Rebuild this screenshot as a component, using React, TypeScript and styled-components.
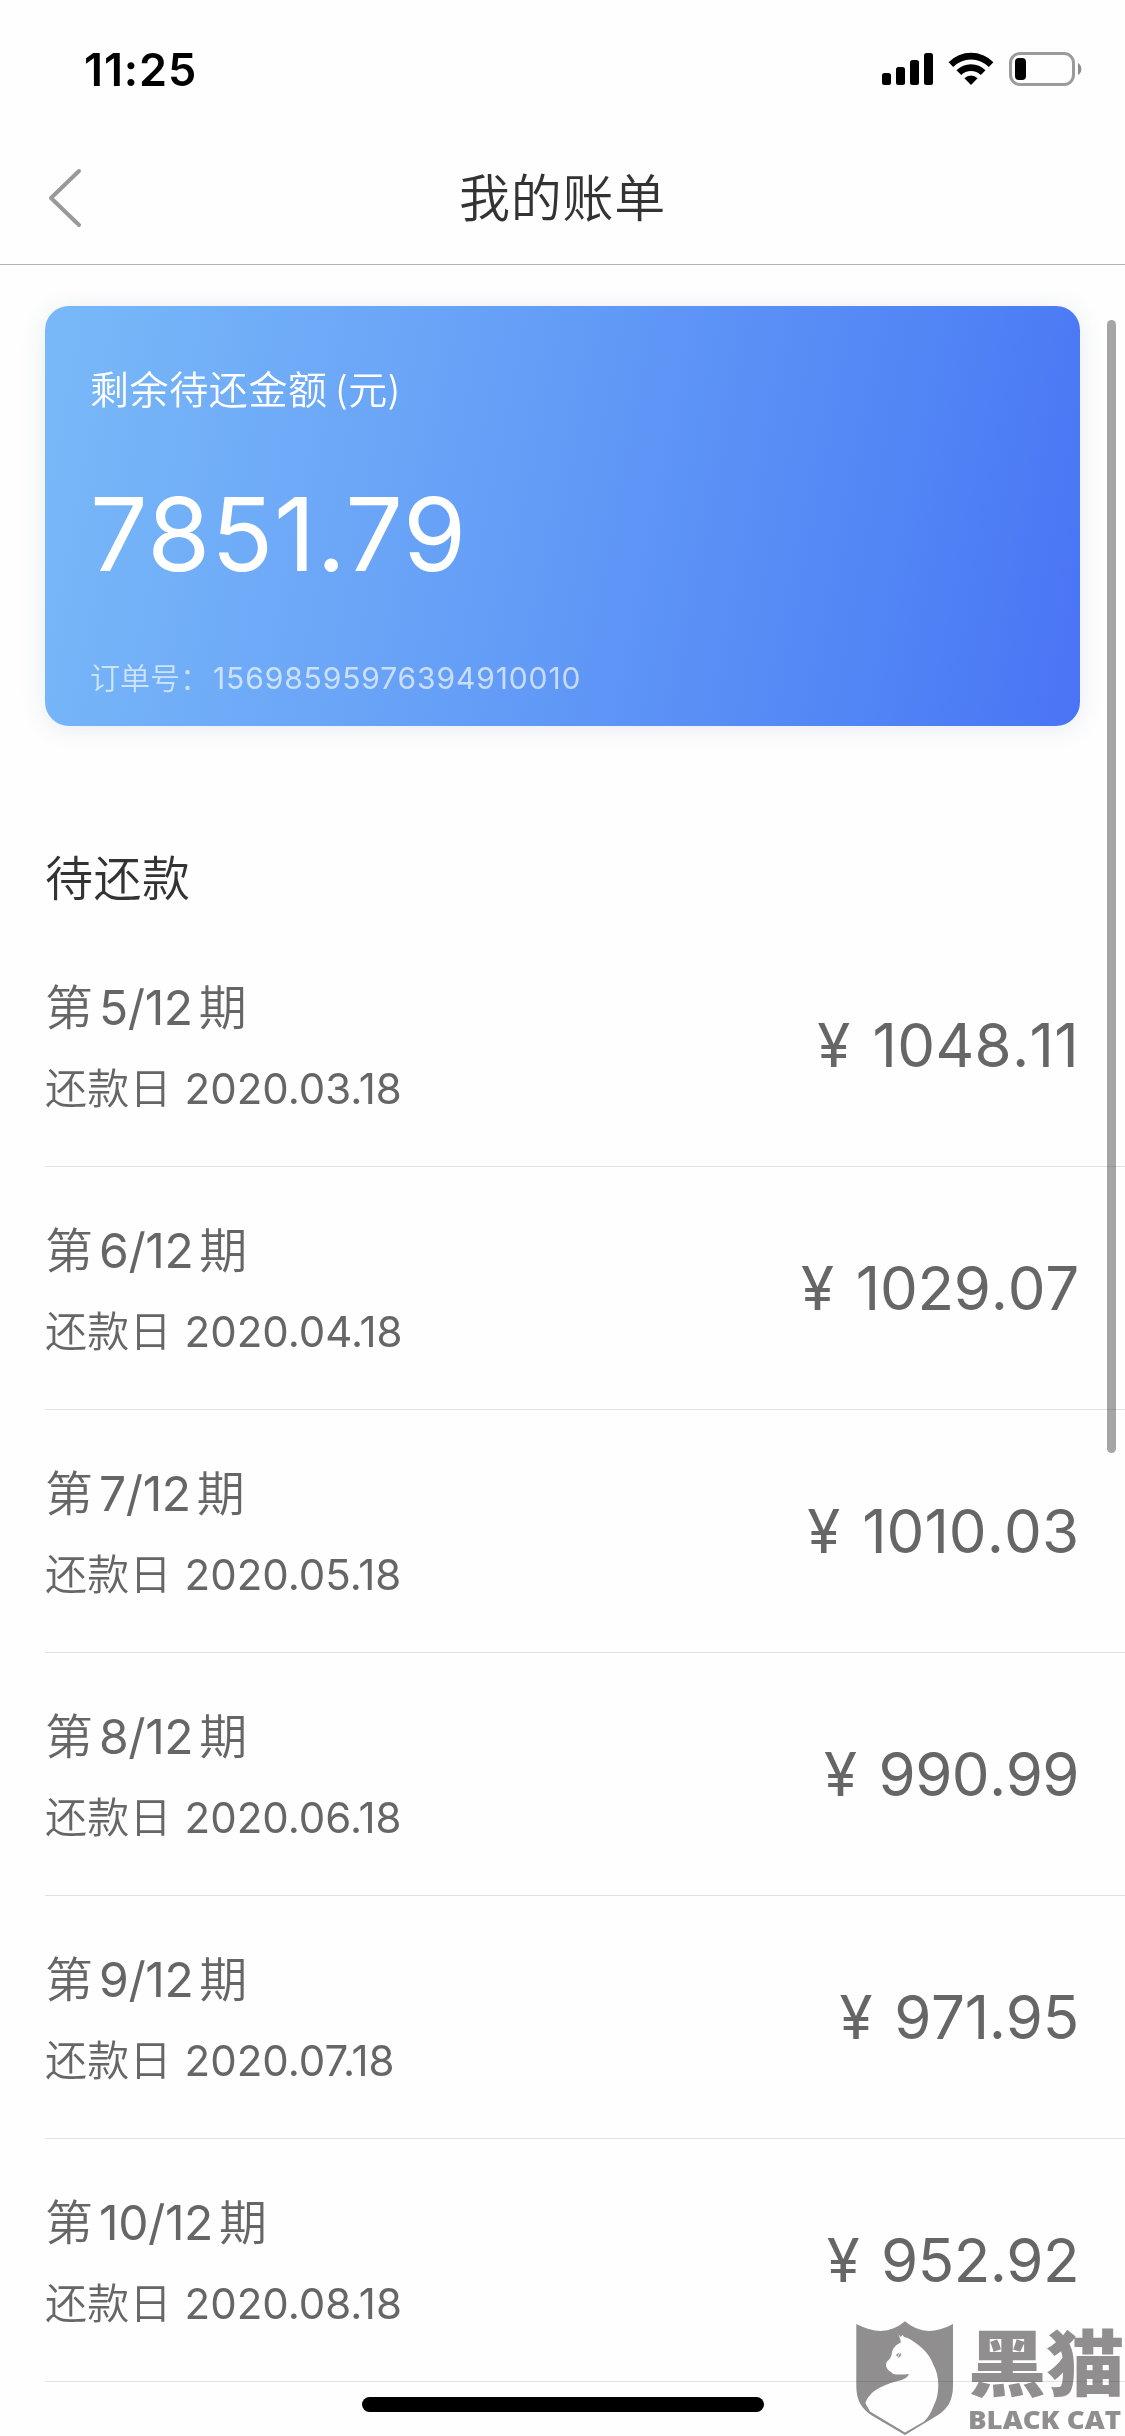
import styled, { createGlobalStyle } from "styled-components";

interface Bill {
  period: string;
  date: string;
  amount: string;
}

const bills: Bill[] = [
  { period: "5/12", date: "2020.03.18", amount: "1048.11" },
  { period: "6/12", date: "2020.04.18", amount: "1029.07" },
  { period: "7/12", date: "2020.05.18", amount: "1010.03" },
  { period: "8/12", date: "2020.06.18", amount: "990.99" },
  { period: "9/12", date: "2020.07.18", amount: "971.95" },
  { period: "10/12", date: "2020.08.18", amount: "952.92" },
];

// ones are narrow, so loosen amounts that have many of them
const getTracking = (amount: string) =>
  (amount.split("1").length - 1) * 0.3 - 0.58;

const StatusIcons = () => (
  <svg width="204" height="40" viewBox="0 0 204 40">
    <rect x="0" y="23" width="9" height="12" rx="2.5" />
    <rect x="14" y="17" width="9" height="18" rx="2.5" />
    <rect x="28" y="10" width="9" height="25" rx="2.5" />
    <rect x="42" y="3" width="9" height="32" rx="2.5" />
    <g transform="translate(66 2)">
      <path d="M0.6 10.2A31.5 31.5 0 0 1 45.4 10.2L40.8 14.9A25 25 0 0 0 5.2 14.9Z" />
      <path d="M8.5 18.2A20.5 20.5 0 0 1 37.5 18.2L32.8 22.9A14 14 0 0 0 13.2 22.9Z" />
      <path d="M16.4 26.2A9.5 9.5 0 0 1 29.6 26.2L23 33Z" />
    </g>
    <rect
      x="128.5"
      y="3.5"
      width="63"
      height="31"
      rx="9.5"
      fill="none"
      stroke="#9b9b9b"
      strokeWidth="3"
    />
    <rect x="133" y="8" width="11" height="22" rx="4" />
    <path d="M196 13a7 7 0 0 1 0 12z" fill="#8c8c8c" />
  </svg>
);

const BackIcon = () => (
  <svg width="34" height="60" viewBox="0 0 34 60">
    <path
      d="M31 3L3 30L31 57"
      fill="none"
      stroke="#999"
      strokeWidth="4"
      strokeLinecap="round"
      strokeLinejoin="round"
    />
  </svg>
);

const Shield = () => (
  <svg width="99" height="116" viewBox="0 0 99 116">
    <path
      d="M1.3 4Q30 19 50 1.3Q70 19 98 4V66C98 82 91 90 83 95L50 115L16 95C8 89 1.3 82 1.3 66Z"
      fill="#918f90"
    />
    <path
      d="M43.5 14L45.5 17L47.7 15L49 17C54 18 58 21 62 24C70 30 75 36 78 44C82 51 83.3 58 83.3 65C83 74 82 79 79 85C76 93 73 98 68.3 102L50 112.5L15 91.5L10.3 83C13 76 18 71 25 67.5C32 64 38 62 45 60.5C50 59 53 57 54 54C49 54.5 43 55 38.3 54C35 51 32 50 31 45.7C31 43 31.5 42 32.5 41C35 39 36 37 36.7 34C37 30 39 27 41.5 25L46 22.3Z"
      fill="#fff"
    />
    <path d="M41 35q2 -2 3 -2l-1.5 4zM45 33q1.5 .5 1 2q-1 3 -3 3z" fill="#918f90" />
  </svg>
);

const App = () => (
  <Screen>
    <GlobalStyle />
    <StatusBar>
      <Clock>11:25</Clock>
      <StatusIcons />
    </StatusBar>
    <NavBar>
      <BackIcon />
      <NavTitle>我的账单</NavTitle>
    </NavBar>
    <Card>
      <CardLabel>
        剩余待还金额<Paren>(元)</Paren>
      </CardLabel>
      <CardAmount>7851.79</CardAmount>
      <CardOrder>
        订单号：<OrderNumber>15698595976394910010</OrderNumber>
      </CardOrder>
    </Card>
    <SectionTitle>待还款</SectionTitle>
    <List>
      {bills.map((b) => (
        <Row key={b.period}>
          <div>
            <Period>
              第<PeriodNumber>{b.period}</PeriodNumber>期
            </Period>
            <DueDate>
              还款日<DateNumber>{b.date}</DateNumber>
            </DueDate>
          </div>
          <Amount $tracking={getTracking(b.amount)}>
            <Yen>¥</Yen>
            {b.amount}
          </Amount>
        </Row>
      ))}
    </List>
    <ScrollThumb />
    <HomeIndicator />
    <Watermark>
      <Shield />
      <Brand>
        <BrandName>黑猫</BrandName>
        <BrandLatin>BLACK CAT</BrandLatin>
      </Brand>
    </Watermark>
  </Screen>
);

const GlobalStyle = createGlobalStyle`
  body {
    margin: 0;
    background-color: #fefefe;
  }
`;
const Screen = styled.div`
  position: relative;
  width: 1125px;
  height: 2436px;
  overflow: hidden;
  background-color: #fefefe;
  font-family: Inter, "Noto Sans CJK SC", sans-serif;
  font-weight: 350;
`;
const StatusBar = styled.div`
  box-sizing: border-box;
  display: flex;
  justify-content: space-between;
  height: 132px;
  padding: 50px 39px 0 84px;
`;
const Clock = styled.div`
  height: 40px;
  line-height: 39px;
  font-size: 45px;
  font-weight: 600;
  letter-spacing: 0.9px;
  color: #000;
`;
const NavBar = styled.div`
  box-sizing: border-box;
  display: flex;
  align-items: center;
  height: 133px;
  padding-left: 48px;
  border-bottom: 1px solid #b2b2b2;
`;
const NavTitle = styled.div`
  flex: 1;
  margin-right: 82px;
  padding-top: 2px;
  text-align: center;
  font-size: 51px;
  letter-spacing: 0.7px;
  line-height: 60px;
  color: #333;
`;
const Card = styled.div`
  box-sizing: border-box;
  display: flex;
  flex-direction: column;
  width: 1035px;
  height: 420px;
  margin: 41px 0 0 45px;
  padding: 56px 0 0 45px;
  border-radius: 24px;
  background: linear-gradient(
    101deg,
    #79b9f8 0%,
    #68a2f7 38%,
    #5e95f6 57%,
    #5184f5 81%,
    #4974f5 100%
  );
  box-shadow: 0 3px 24px rgba(60, 90, 150, 0.12);
  color: #fff;
`;
const CardLabel = styled.div`
  font-size: 39px;
  letter-spacing: 0.6px;
  line-height: 56px;
`;
const Paren = styled.span`
  margin-left: 7px;
  letter-spacing: 0;
`;
const CardAmount = styled.div`
  margin-top: 54px;
  font-size: 102px;
  font-weight: 400;
  letter-spacing: 0.9px;
  line-height: 124px;
`;
const CardOrder = styled.div`
  margin-top: 60px;
  font-size: 30px;
  line-height: 44px;
  opacity: 0.65;
`;
const OrderNumber = styled.span`
  margin-left: 3px;
  font-weight: 400;
  letter-spacing: 0.88px;
`;
const SectionTitle = styled.div`
  margin: 117px 0 0 45px;
  font-size: 48px;
  letter-spacing: 0.5px;
  line-height: 72px;
  color: #333;
`;
const List = styled.div`
  margin: 9px 0 0 45px;
  color: #666;
`;
const Row = styled.div`
  box-sizing: border-box;
  display: flex;
  align-items: center;
  justify-content: space-between;
  height: 243px;
  padding-right: 46px;
  border-bottom: 1px solid #e2e2e2;
`;
const Period = styled.div`
  padding-top: 4px;
  font-size: 48px;
  line-height: 72px;
`;
const PeriodNumber = styled.span`
  margin: 0 6px;
  font-weight: 400;
  letter-spacing: -0.4px;
`;
const DueDate = styled.div`
  margin-top: 12px;
  font-size: 42px;
  letter-spacing: 0.2px;
  line-height: 66px;
`;
const DateNumber = styled.span`
  margin-left: 13px;
  font-weight: 400;
  letter-spacing: 0;
`;
const Amount = styled.div<{ $tracking: number }>`
  font-size: 60px;
  font-weight: 400;
  font-kerning: none;
  letter-spacing: ${(p) => p.$tracking}px;
  line-height: 72px;
`;
const Yen = styled.span`
  margin-right: 22px;
`;
const ScrollThumb = styled.div`
  position: absolute;
  top: 320px;
  right: 9px;
  width: 9px;
  height: 1133px;
  border-radius: 5px;
  background-color: rgba(0, 0, 0, 0.35);
`;
const HomeIndicator = styled.div`
  position: absolute;
  left: 362px;
  bottom: 24px;
  width: 402px;
  height: 15px;
  border-radius: 8px;
  background-color: #000;
`;
const Watermark = styled.div`
  position: absolute;
  right: 0;
  bottom: 0;
  display: flex;
  width: 270px;
  height: 116px;
  color: #918f90;
  mix-blend-mode: multiply;
`;
const Brand = styled.div`
  margin-left: 14px;
`;
const BrandName = styled.div`
  height: 82px;
  margin-top: 3px;
  font-size: 76px;
  font-weight: 900;
  line-height: 82px;
  white-space: nowrap;
  transform: scale(1.03, 0.94);
  transform-origin: 0 50%;
`;
const BrandLatin = styled.div`
  margin-top: 1px;
  font-family: "Open Sans", sans-serif;
  font-size: 24px;
  font-weight: 800;
  line-height: 28px;
  white-space: nowrap;
  transform: scaleX(1.15);
  transform-origin: 0 50%;
`;

export default App;
